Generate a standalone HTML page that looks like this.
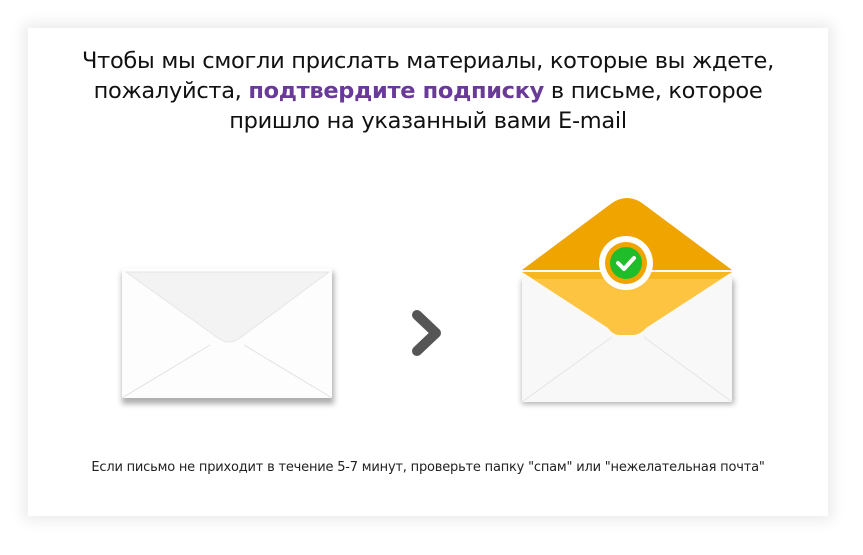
<!DOCTYPE html>
<html><head><meta charset="utf-8"><style>
html,body{margin:0;padding:0;background:#fff;width:863px;height:555px;overflow:hidden}
.card{position:absolute;left:28px;top:28px;width:800px;height:488px;background:#fff;box-shadow:0 0 14px 4px rgba(0,0,0,0.09)}
.t{position:absolute;left:0;top:18px;width:800px;text-align:center;font-family:"DejaVu Sans","Liberation Sans",sans-serif;font-size:22.5px;line-height:30px;color:#111;letter-spacing:-0.3px}
.t b{color:#6a3a9a}
.f{position:absolute;left:0;top:432px;width:800px;text-align:center;font-family:"DejaVu Sans","Liberation Sans",sans-serif;font-size:13px;color:#222;letter-spacing:-0.2px}
svg{position:absolute}
</style></head><body>
<div class="card">
<div class="t">Чтобы мы смогли прислать материалы, которые вы ждете,<br>пожалуйста, <b>подтвердите подписку</b> в письме, которое<br>пришло на указанный вами E-mail</div>
<div class="f">Если письмо не приходит в течение 5-7 минут, проверьте папку "спам" или "нежелательная почта"</div>
</div>
<svg style="left:110px;top:258px" width="240" height="160" viewBox="110 258 240 160">
<defs><filter id="s" x="-10%" y="-10%" width="120%" height="130%"><feGaussianBlur stdDeviation="3"/></filter></defs>
<rect x="122" y="272" width="212" height="132" fill="#777" opacity=".6" filter="url(#s)"/>
<rect x="122" y="268" width="210" height="130" fill="#fdfdfd"/>
<path d="M122 398 L210 345 M332 398 L244 345" stroke="#e2e2e2" stroke-width="1" fill="none"/>
<path d="M126 272 L218 338 Q229 346 240 338 L329 272 Z" fill="#f3f3f3" stroke="#e6e6e6"/>
</svg>
<svg style="left:405px;top:305px" width="45" height="55" viewBox="0 0 45 55">
<path d="M12 10 L31 28 L12 46" stroke="#555" stroke-width="10" stroke-linecap="round" stroke-linejoin="round" fill="none"/>
</svg>
<svg style="left:510px;top:190px" width="235" height="225" viewBox="510 190 235 225">
<defs><filter id="s2" x="-10%" y="-10%" width="120%" height="130%"><feGaussianBlur stdDeviation="3"/></filter></defs>
<rect x="522" y="280" width="212" height="124" fill="#777" opacity=".6" filter="url(#s2)"/>
<path d="M522 270 L612 203 Q627 193 642 203 L732 270 Z" fill="#f0a400"/>
<path d="M522 270 L732 270 L732 402 L522 402 Z" fill="#f8f8f8"/>
<path d="M522 272 L732 272 L646 328 Q640 335 633 335 L620 335 Q613 335 608 328 Z" fill="#fcc440"/>
<path d="M522 272 L732 272 L720 279 L534 279 Z" fill="#f6b720"/>
<path d="M522 402 L612 337 M732 402 L644 337" stroke="#e4e4e4" fill="none"/>
<circle cx="626" cy="263" r="27" fill="#fff"/>
<circle cx="626" cy="263" r="21" fill="#f0a400"/>
<circle cx="626" cy="263" r="16" fill="#1fbd2a"/>
<path d="M618 263 L624 269 L634 258" stroke="#fff" stroke-width="4" stroke-linecap="round" stroke-linejoin="round" fill="none"/>
</svg>
</body></html>
